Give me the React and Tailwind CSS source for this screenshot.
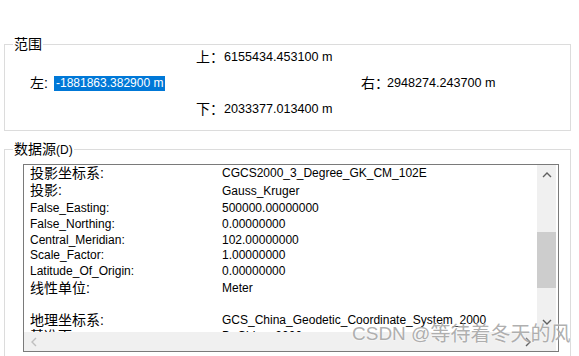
import React from "react";

const FONT = "font-['Liberation_Sans','Noto_Sans_CJK_SC',sans-serif]";

const rows = [
  { k: "投影坐标系:", v: "CGCS2000_3_Degree_GK_CM_102E", h: "h-[16px]", cjk: true },
  { k: "投影:", v: "Gauss_Kruger", h: "h-[19px]", cjk: true },
  { k: "False_Easting:", v: "500000.00000000", h: "h-[16px]" },
  { k: "False_Northing:", v: "0.00000000", h: "h-[16px]" },
  { k: "Central_Meridian:", v: "102.00000000", h: "h-[16px]" },
  { k: "Scale_Factor:", v: "1.00000000", h: "h-[14px]" },
  { k: "Latitude_Of_Origin:", v: "0.00000000", h: "h-[18px]" },
  { k: "线性单位:", v: "Meter", h: "h-[16px]", cjk: true },
  { k: "", v: "", h: "h-[16px]" },
  { k: "地理坐标系:", v: "GCS_China_Geodetic_Coordinate_System_2000", h: "h-[16px]", cjk: true },
  { k: "基准面:", v: "D_China_2000", h: "h-[16px]", cjk: true },
];

const Chevron = ({ dir, color = "#606060" }) => {
  const pts = {
    up: "1,6 5,2 9,6",
    down: "1,2 5,6 9,2",
    left: "6,1 2,5 6,9",
    right: "2,1 6,5 2,9",
  }[dir];
  const size = dir === "up" || dir === "down" ? { w: 10, h: 8 } : { w: 8, h: 10 };
  return (
    <svg width={size.w} height={size.h} viewBox={`0 0 ${size.w} ${size.h}`}>
      <polyline points={pts} fill="none" stroke={color} strokeWidth="1.4" />
    </svg>
  );
};

const GroupBox = ({ label, className, children }) => (
  <div className={`relative ml-[4px] w-[567px] border border-[#dcdcdc] ${className}`}>
    <span className="absolute left-[8px] top-[-9px] bg-white px-[1px] text-[14px] leading-[16px] text-black">
      {label}
    </span>
    {children}
  </div>
);

export default function App() {
  return (
    <div className={`relative h-[356px] w-[579px] overflow-hidden bg-white text-black ${FONT}`}>
      <div className="pt-[44px]">
        <GroupBox label="范围" className="h-[87px]">
          <div className="flex h-[25px] items-center pl-[191px]">
            <span className="w-[28px] text-[14px]">上：</span>
            <span className="text-[12.6px]">6155434.453100 m</span>
          </div>
          <div className="flex h-[26px] items-center pl-[25px]">
            <div className="flex w-[331px] items-center">
              <span className="w-[24px] text-[14px]">左:</span>
              <span className="bg-[#0078d7] px-[2px] text-[12px] leading-[15px] text-white">
                -1881863.382900 m
              </span>
            </div>
            <span className="w-[26px] text-[14px]">右：</span>
            <span className="text-[12.6px]">2948274.243700 m</span>
          </div>
          <div className="flex h-[26px] items-center pl-[191px]">
            <span className="w-[28px] text-[14px]">下：</span>
            <span className="text-[12.6px]">2033377.013400 m</span>
          </div>
        </GroupBox>

        <GroupBox label={<>数据源<span className="text-[12px]">(D)</span></>} className="mt-[18px] h-[220px]">
          <div className="ml-[18px] mt-[14px] flex h-[188px] w-[536px] flex-col border border-[#7a7a7a]">
            <div className="flex h-[167px]">
              <div className="w-[513px] overflow-hidden pl-[6px]">
                {rows.map((r, i) => (
                  <div key={i} className={`flex items-center whitespace-nowrap ${r.h}`}>
                    <span className={`w-[192px] shrink-0 ${r.cjk ? "text-[14px]" : "text-[12px]"}`}>
                      {r.k}
                    </span>
                    <span className="text-[12px]">{r.v}</span>
                  </div>
                ))}
              </div>
              <div className="flex w-[19px] flex-col bg-[#f0f0f0]">
                <div className="flex h-[20px] items-center justify-center">
                  <Chevron dir="up" />
                </div>
                <div className="mt-[47px] h-[56px] bg-[#cdcdcd]" />
                <div className="mt-auto flex h-[20px] items-center justify-center">
                  <Chevron dir="down" />
                </div>
              </div>
              <div className="w-[2px]" />
            </div>
            <div className="flex h-[19px]">
              <div className="flex w-[513px] items-center justify-between bg-[#f0f0f0]">
                <div className="flex w-[19px] justify-center">
                  <Chevron dir="left" color="#bfbfbf" />
                </div>
                <div className="flex w-[19px] justify-center">
                  <Chevron dir="right" />
                </div>
              </div>
              <div className="w-[19px] bg-[#f0f0f0]" />
              <div className="w-[2px]" />
            </div>
          </div>
        </GroupBox>
      </div>

      <div className="absolute left-[352px] top-[322px] flex items-center whitespace-nowrap text-[#9a9a9a]/80 [text-shadow:0_0_2px_white]">
        <span className="text-[19px] leading-[24px]">CSDN @</span>
        <span className="text-[20px] leading-[24px]">等待着冬天的风</span>
      </div>
    </div>
  );
}
